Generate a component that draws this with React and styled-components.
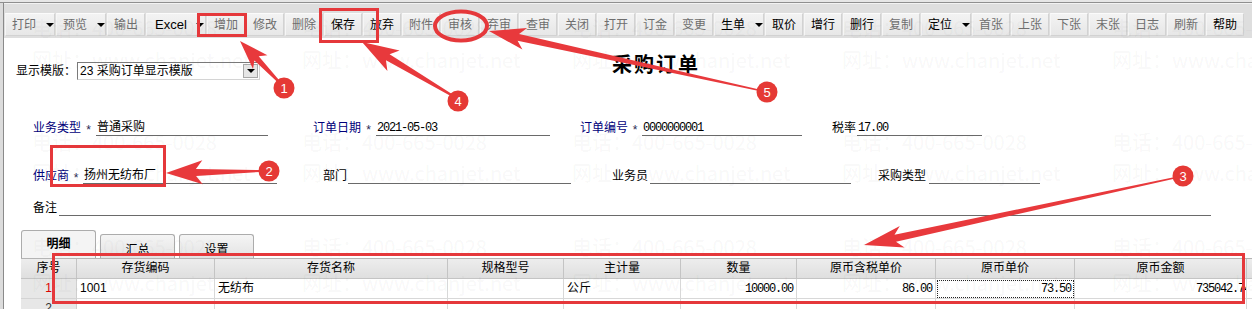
import React from "react";
import styled, { createGlobalStyle } from "styled-components";

const GlobalStyle = createGlobalStyle`
  html, body {
    margin: 0;
    width: 1252px;
    height: 309px;
    overflow: hidden;
    background: #dcdcdc;
    font-family: "Liberation Sans", "Noto Sans CJK SC", sans-serif;
    font-size: 12px;
    color: #000;
  }
`;

const tools = [
  { t: "打印", dd: true, off: true },
  { t: "预览", dd: true, off: true },
  { t: "输出", off: true },
  { t: "Excel", dd: true, latin: true },
  { t: "增加", off: true },
  { t: "修改", off: true },
  { t: "删除", off: true },
  { t: "保存" },
  { t: "放弃" },
  { t: "附件", off: true },
  { t: "审核", off: true },
  { t: "弃审", off: true },
  { t: "查审", off: true },
  { t: "关闭", off: true },
  { t: "打开", off: true },
  { t: "订金", off: true },
  { t: "变更", off: true },
  { t: "生单", dd: true },
  { t: "取价" },
  { t: "增行" },
  { t: "删行" },
  { t: "复制", off: true },
  { t: "定位", dd: true },
  { t: "首张", off: true },
  { t: "上张", off: true },
  { t: "下张", off: true },
  { t: "末张", off: true },
  { t: "日志", off: true },
  { t: "刷新", off: true },
  { t: "帮助" },
];

const columns = [
  { t: "序号", w: 56 },
  { t: "存货编码", w: 138 },
  { t: "存货名称", w: 233 },
  { t: "规格型号", w: 116 },
  { t: "主计量", w: 117 },
  { t: "数量", w: 116 },
  { t: "原币含税单价", w: 139 },
  { t: "原币单价", w: 139 },
  { t: "原币金额", w: 172 },
  { t: "", w: 120 },
];

function arrowPoints(x1, y1, x2, y2, hl, hw, tw, sw) {
  const dx = x2 - x1;
  const dy = y2 - y1;
  const len = Math.hypot(dx, dy);
  const ux = dx / len;
  const uy = dy / len;
  const nx = -uy;
  const ny = ux;
  const bx = x2 - ux * hl;
  const by = y2 - uy * hl;
  const n = hl * 0.22;
  const pts = [
    [x1 + (nx * tw) / 2, y1 + (ny * tw) / 2],
    [bx + (nx * sw) / 2, by + (ny * sw) / 2],
    [bx - ux * n + (nx * hw) / 2, by - uy * n + (ny * hw) / 2],
    [x2, y2],
    [bx - ux * n - (nx * hw) / 2, by - uy * n - (ny * hw) / 2],
    [bx - (nx * sw) / 2, by - (ny * sw) / 2],
    [x1 - (nx * tw) / 2, y1 - (ny * tw) / 2],
  ];
  return pts.map((p) => p.map((v) => v.toFixed(1)).join(",")).join(" ");
}

const arrows = [
  [281, 84, 240, 41, 24, 20, 2, 6],
  [453, 96, 362, 42, 30, 24, 2, 7],
  [758, 90, 489, 31, 30, 22, 1.5, 7],
  [260, 171, 166, 173, 30, 24, 2, 7],
  [1174, 178, 864, 245, 32, 22, 1.5, 7],
];

const badges = [
  { n: "1", x: 284, y: 88 },
  { n: "4", x: 458, y: 101 },
  { n: "5", x: 767, y: 92 },
  { n: "2", x: 269, y: 171 },
  { n: "3", x: 1183, y: 176 },
];

const marks = [];
[28, 142, 247].forEach((y) => {
  for (let i = 0; i < 5; i++) marks.push({ t: "电话：400-665-0028", x: 32 + i * 270, y });
});
[60, 173, 283].forEach((y) => {
  for (let i = 0; i < 5; i++) marks.push({ t: "网址：www.chanjet.net", x: 32 + i * 270, y });
});

function buttonWidth(b) {
  if (b.latin) return 60;
  return b.dd ? 50 : 38;
}

export default function App() {
  return (
    <Root>
      <GlobalStyle />
      <TopStrip />
      <Window>
        <Toolbar>
          {tools.map((b) => (
            <ToolButton
              key={b.t}
              $w={buttonWidth(b)}
              $off={b.off}
              $latin={b.latin}
            >
              {b.t}
              {b.dd && <DropArrow />}
            </ToolButton>
          ))}
        </Toolbar>

        <HeadRow>
          <PlainLabel>显示模版：</PlainLabel>
          <SelectBox>
            <SelectText>23 采购订单显示模版</SelectText>
            <SelectButton>
              <DropArrow />
            </SelectButton>
          </SelectBox>
          <Title>采购订单</Title>
        </HeadRow>

        <FieldRow $mt={36}>
          <Field $w={280}>
            <Label $req>业务类型</Label>
            <Star $w={15}>*</Star>
            <Line $w={172}>普通采购</Line>
          </Field>
          <Field $w={267}>
            <Label $req>订单日期</Label>
            <Star $w={15}>*</Star>
            <Line $w={174}>
              <Num>2021-05-03</Num>
            </Line>
          </Field>
          <Field $w={252}>
            <Label $req>订单编号</Label>
            <Star $w={14}>*</Star>
            <Line $w={160}>
              <Num>0000000001</Num>
            </Line>
          </Field>
          <Field $w={160}>
            <Label>税率</Label>
            <Line $w={125} $ml={1}>
              <Num>17.00</Num>
            </Line>
          </Field>
        </FieldRow>

        <FieldRow $mt={28}>
          <Field $w={290}>
            <Label $req>供应商</Label>
            <Star $w={14}>*</Star>
            <Line $w={194}>扬州无纺布厂</Line>
          </Field>
          <Field $w={289}>
            <Label>部门</Label>
            <Line $w={223} $ml={1} />
          </Field>
          <Field $w={266}>
            <Label>业务员</Label>
            <Line $w={201} $ml={2} />
          </Field>
          <Field $w={170}>
            <Label>采购类型</Label>
            <Line $w={111} $ml={3} />
          </Field>
        </FieldRow>

        <FieldRow $mt={12}>
          <Field $w={1180}>
            <Label>备注</Label>
            <Line $w={1152} $ml={2} />
          </Field>
        </FieldRow>

        <TabBar>
          <Tab $active>明细</Tab>
          <Tab>汇总</Tab>
          <Tab>设置</Tab>
        </TabBar>

        <Grid>
          {columns.map((c, i) => (
            <HeadCell key={i}>{c.t}</HeadCell>
          ))}

          <RowNo $current>1</RowNo>
          <Cell>1001</Cell>
          <Cell>无纺布</Cell>
          <Cell />
          <Cell>公斤</Cell>
          <Cell $right>
            <Num>10000.00</Num>
          </Cell>
          <Cell $right>
            <Num>86.00</Num>
          </Cell>
          <Cell $right $focus>
            <Num>73.50</Num>
          </Cell>
          <Cell $right $clip>
            <Num>735042.74</Num>
          </Cell>
          <Cell />

          <RowNo>2</RowNo>
          {columns.slice(1).map((c, i) => (
            <Cell key={i} />
          ))}
        </Grid>
      </Window>

      <Watermarks>
        {marks.map((m, i) => (
          <Mark key={i} style={{ left: m.x, top: m.y - 12 }}>
            {m.t}
          </Mark>
        ))}
      </Watermarks>

      <Overlay width="1252" height="309" viewBox="0 0 1252 309">
        <g fill="none" stroke="#e5383b" strokeWidth="3">
          <rect x="198.5" y="14.5" width="47" height="21" />
          <rect x="320.5" y="9.5" width="57" height="32" />
          <rect x="51.5" y="146.5" width="113" height="39" />
          <rect x="53.5" y="254.5" width="1190" height="48" />
          <ellipse cx="461" cy="26" rx="26" ry="14.5" strokeWidth="4" />
        </g>
        {arrows.map((a, i) => (
          <polygon key={i} points={arrowPoints(...a)} fill="#e8393c" />
        ))}
        {badges.map((b) => (
          <g key={b.n}>
            <circle cx={b.x} cy={b.y} r="10.5" fill="#e53935" />
            <text
              x={b.x}
              y={b.y + 4.5}
              textAnchor="middle"
              fill="#fff"
              fontSize="13"
              fontFamily="Liberation Sans, sans-serif"
            >
              {b.n}
            </text>
          </g>
        ))}
      </Overlay>
    </Root>
  );
}

const Root = styled.div`
  position: relative;
  width: 1252px;
  height: 309px;
  overflow: hidden;
  background: #dcdcdc;
`;

const TopStrip = styled.div`
  height: 2px;
  background: #e6e6e6;
  border-bottom: 1px solid #8f8f8f;
`;

const Window = styled.div`
  margin-left: 3px;
  height: 306px;
  border-left: 1px solid #8a8a8a;
  background: #fff;
  overflow: hidden;
`;

const Toolbar = styled.div`
  display: flex;
  gap: 1px;
  height: 23px;
  padding: 9px 0 2px 1px;
  background: #dedede;
  border-top: 1px solid #f2f2f2;
  overflow: hidden;
`;

const ToolButton = styled.div`
  flex: none;
  display: flex;
  align-items: center;
  box-sizing: border-box;
  width: ${(p) => p.$w}px;
  height: 23px;
  padding-left: ${(p) => (p.$latin ? 8 : 6)}px;
  background: linear-gradient(#f3f3f3, #e7e7e7);
  border: 1px solid #d2d2d2;
  border-top-color: #fbfbfb;
  border-left-color: #f6f6f6;
  color: ${(p) => (p.$off ? "#6e6e6e" : "#000")};
  font-size: ${(p) => (p.$latin ? "13px" : "12px")};
  line-height: 14px;
  white-space: nowrap;

  & > span {
    margin-left: ${(p) => (p.$latin ? 9 : 10)}px;
  }
`;

const DropArrow = styled.span`
  display: inline-block;
  flex: none;
  width: 0;
  height: 0;
  border-left: 4px solid transparent;
  border-right: 4px solid transparent;
  border-top: 4px solid #000;
`;

const HeadRow = styled.div`
  display: flex;
  align-items: center;
  height: 18px;
  margin-top: 24px;
  padding-left: 12px;
`;

const PlainLabel = styled.span`
  width: 61px;
  line-height: 14px;
  white-space: nowrap;
`;

const SelectBox = styled.div`
  display: flex;
  box-sizing: border-box;
  width: 183px;
  height: 18px;
  border: 1px solid #7a7a7a;
  border-right-color: #d4d4d4;
  border-bottom-color: #d4d4d4;
  background: #fff;
`;

const SelectText = styled.span`
  flex: 1;
  padding-left: 2px;
  line-height: 16px;
  white-space: nowrap;
`;

const SelectButton = styled.span`
  display: flex;
  align-items: center;
  justify-content: center;
  width: 15px;
  margin: 1px;
  background: #e6e6e6;
  border: 1px solid #a8a8a8;
  box-sizing: border-box;
`;

const Title = styled.div`
  margin-left: 352px;
  margin-bottom: 12px;
  font-size: 20px;
  font-weight: bold;
  letter-spacing: 2px;
  line-height: 22px;
  white-space: nowrap;
`;

const FieldRow = styled.div`
  display: flex;
  align-items: flex-end;
  height: 20px;
  margin-top: ${(p) => p.$mt}px;
  padding-left: 29px;
`;

const Field = styled.div`
  flex: none;
  display: flex;
  align-items: flex-end;
  width: ${(p) => p.$w}px;
`;

const Label = styled.span`
  line-height: 14px;
  height: 15px;
  white-space: nowrap;
  color: ${(p) => (p.$req ? "#00007a" : "#000")};
`;

const Star = styled.span`
  width: ${(p) => p.$w}px;
  height: 14px;
  line-height: 16px;
  text-align: center;
  color: #2a2a55;
  font-size: 12px;
`;

const Line = styled.span`
  box-sizing: border-box;
  width: ${(p) => p.$w}px;
  height: 16px;
  margin-left: ${(p) => p.$ml || 0}px;
  padding-left: 1px;
  line-height: 14px;
  border-bottom: 1px solid #6a6a6a;
  white-space: nowrap;
`;

const Num = styled.span`
  font-family: "Liberation Mono", monospace;
  font-size: 12px;
  letter-spacing: -1.2px;
`;

const TabBar = styled.div`
  display: flex;
  align-items: flex-end;
  gap: 4px;
  margin-top: 14px;
  padding-left: 17px;
`;

const Tab = styled.div`
  box-sizing: border-box;
  width: 75px;
  height: ${(p) => (p.$active ? 28 : 24)}px;
  padding-top: ${(p) => (p.$active ? 6 : 8)}px;
  border: 1px solid #acacac;
  border-bottom: none;
  border-radius: 3px 3px 0 0;
  background: ${(p) =>
    p.$active ? "#f4f4f4" : "linear-gradient(#f5f5f5, #e3e3e3)"};
  text-align: center;
  line-height: 14px;
  font-weight: ${(p) => (p.$active ? "bold" : "normal")};
`;

const Grid = styled.div`
  display: grid;
  grid-template-columns: ${columns.map((c) => c.w + "px").join(" ")};
  grid-auto-rows: 20px;
  margin-left: 17px;
  width: max-content;
  border-top: 1px solid #b4b4b4;
`;

const HeadCell = styled.div`
  box-sizing: border-box;
  background: linear-gradient(#ededed, #dfdfdf);
  border-right: 1px solid #c4c4c4;
  border-bottom: 1px solid #c4c4c4;
  text-align: center;
  line-height: 19px;
  white-space: nowrap;
`;

const RowNo = styled.div`
  box-sizing: border-box;
  background: #e7e7e7;
  border-right: 1px solid #cfcfcf;
  border-bottom: 1px solid #d4d4d4;
  text-align: center;
  line-height: 19px;
  color: ${(p) => (p.$current ? "#e00000" : "#333")};
`;

const Cell = styled.div`
  box-sizing: border-box;
  padding: 0 ${(p) => (p.$clip ? 0 : 3)}px 0 3px;
  background: #fff;
  border-right: 1px solid #d8d8d8;
  border-bottom: 1px solid #d8d8d8;
  line-height: 19px;
  font-size: 12px;
  white-space: nowrap;
  overflow: hidden;
  text-align: ${(p) => (p.$right ? "right" : "left")};
  outline: ${(p) => (p.$focus ? "1px dotted #222" : "none")};
  outline-offset: -2px;

  & > span {
    margin-right: ${(p) => (p.$clip ? -4 : 0)}px;
  }
`;

const Watermarks = styled.div`
  position: absolute;
  inset: 0;
  pointer-events: none;
`;

const Mark = styled.span`
  position: absolute;
  font-family: "Noto Sans CJK SC", sans-serif;
  font-size: 20px;
  line-height: 24px;
  color: rgba(90, 90, 90, 0.055);
  white-space: nowrap;
`;

const Overlay = styled.svg`
  position: absolute;
  top: 0;
  left: 0;
  pointer-events: none;
`;
